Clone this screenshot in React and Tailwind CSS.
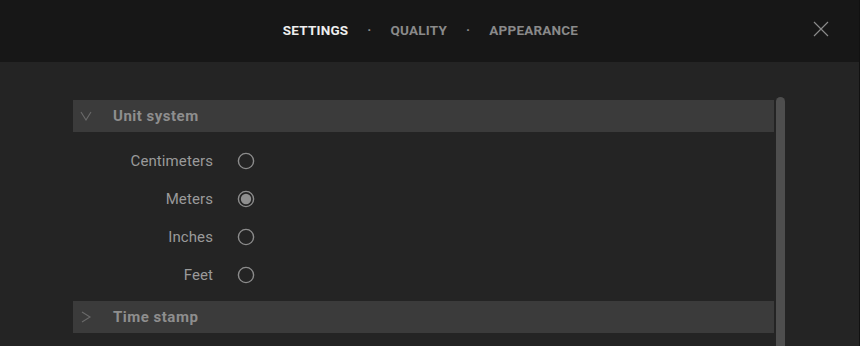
import React from "react";

const Radio = ({ checked }) => (
  <svg width="18" height="18" viewBox="0 0 18 18">
    <circle cx="9" cy="9" r="7.6" fill="none" stroke="#8c8c8c" strokeWidth="1.4" />
    {checked && <circle cx="9" cy="9" r="5.2" fill="#8f8f8f" />}
  </svg>
);

const Section = ({ open, title }) => (
  <div className="flex h-[32px] items-center bg-[#3b3b3b]">
    <div className="flex w-[40px] items-center pl-[7px]">
      {open ? (
        <svg width="12" height="10" viewBox="0 0 12 10">
          <path d="M1 1 L6 9 L11 1" fill="none" stroke="#6a6a6a" strokeWidth="1.1" />
        </svg>
      ) : (
        <svg width="12" height="12" viewBox="0 0 12 12">
          <path d="M2 1 L10 6 L2 11" fill="none" stroke="#6a6a6a" strokeWidth="1.1" />
        </svg>
      )}
    </div>
    <span className="text-[15px] font-bold text-[#8e8e8e] tracking-[0.5px]">{title}</span>
  </div>
);

export default function App() {
  const units = ["Centimeters", "Meters", "Inches", "Feet"];
  return (
    <div
      className="flex h-[346px] w-[860px] flex-col overflow-hidden bg-[#242424] border-r border-[#111]"
      style={{ fontFamily: "Roboto, 'Liberation Sans', sans-serif" }}
    >
      <div className="relative flex h-[62px] shrink-0 items-center justify-center bg-[#171717] pl-[2px] pb-[2px]">
        <div className="flex items-center text-[13.5px] font-bold tracking-[0.2px]">
          <span className="text-[#eeeeee]">SETTINGS</span>
          <span className="mx-[19px] text-[#8a8a8a]">·</span>
          <span className="text-[#8a8a8a]">QUALITY</span>
          <span className="mx-[19px] text-[#8a8a8a]">·</span>
          <span className="text-[#8a8a8a]">APPEARANCE</span>
        </div>
        <svg className="absolute left-[813px] top-[21px]" width="16" height="16" viewBox="0 0 16 16">
          <path d="M1 1 L15 15 M15 1 L1 15" stroke="#8a8a8a" strokeWidth="1.2" />
        </svg>
      </div>
      <div className="flex flex-1 pl-[73px] pt-[35px]">
        <div className="flex w-[701px] flex-col pt-[3px]">
          <Section open title="Unit system" />
          <div className="flex flex-col pt-[10px] pb-[7px]">
            {units.map((u, i) => (
              <div key={u} className="flex h-[38px] items-center">
                <span className="w-[140px] text-right text-[15px] tracking-[0.1px] text-[#9a9a9a]">{u}</span>
                <div className="ml-[24px]">
                  <Radio checked={i === 1} />
                </div>
              </div>
            ))}
          </div>
          <Section title="Time stamp" />
        </div>
        <div className="ml-[2px] w-[9px] rounded-t-[5px] bg-[#4e4e4e]" />
      </div>
    </div>
  );
}
